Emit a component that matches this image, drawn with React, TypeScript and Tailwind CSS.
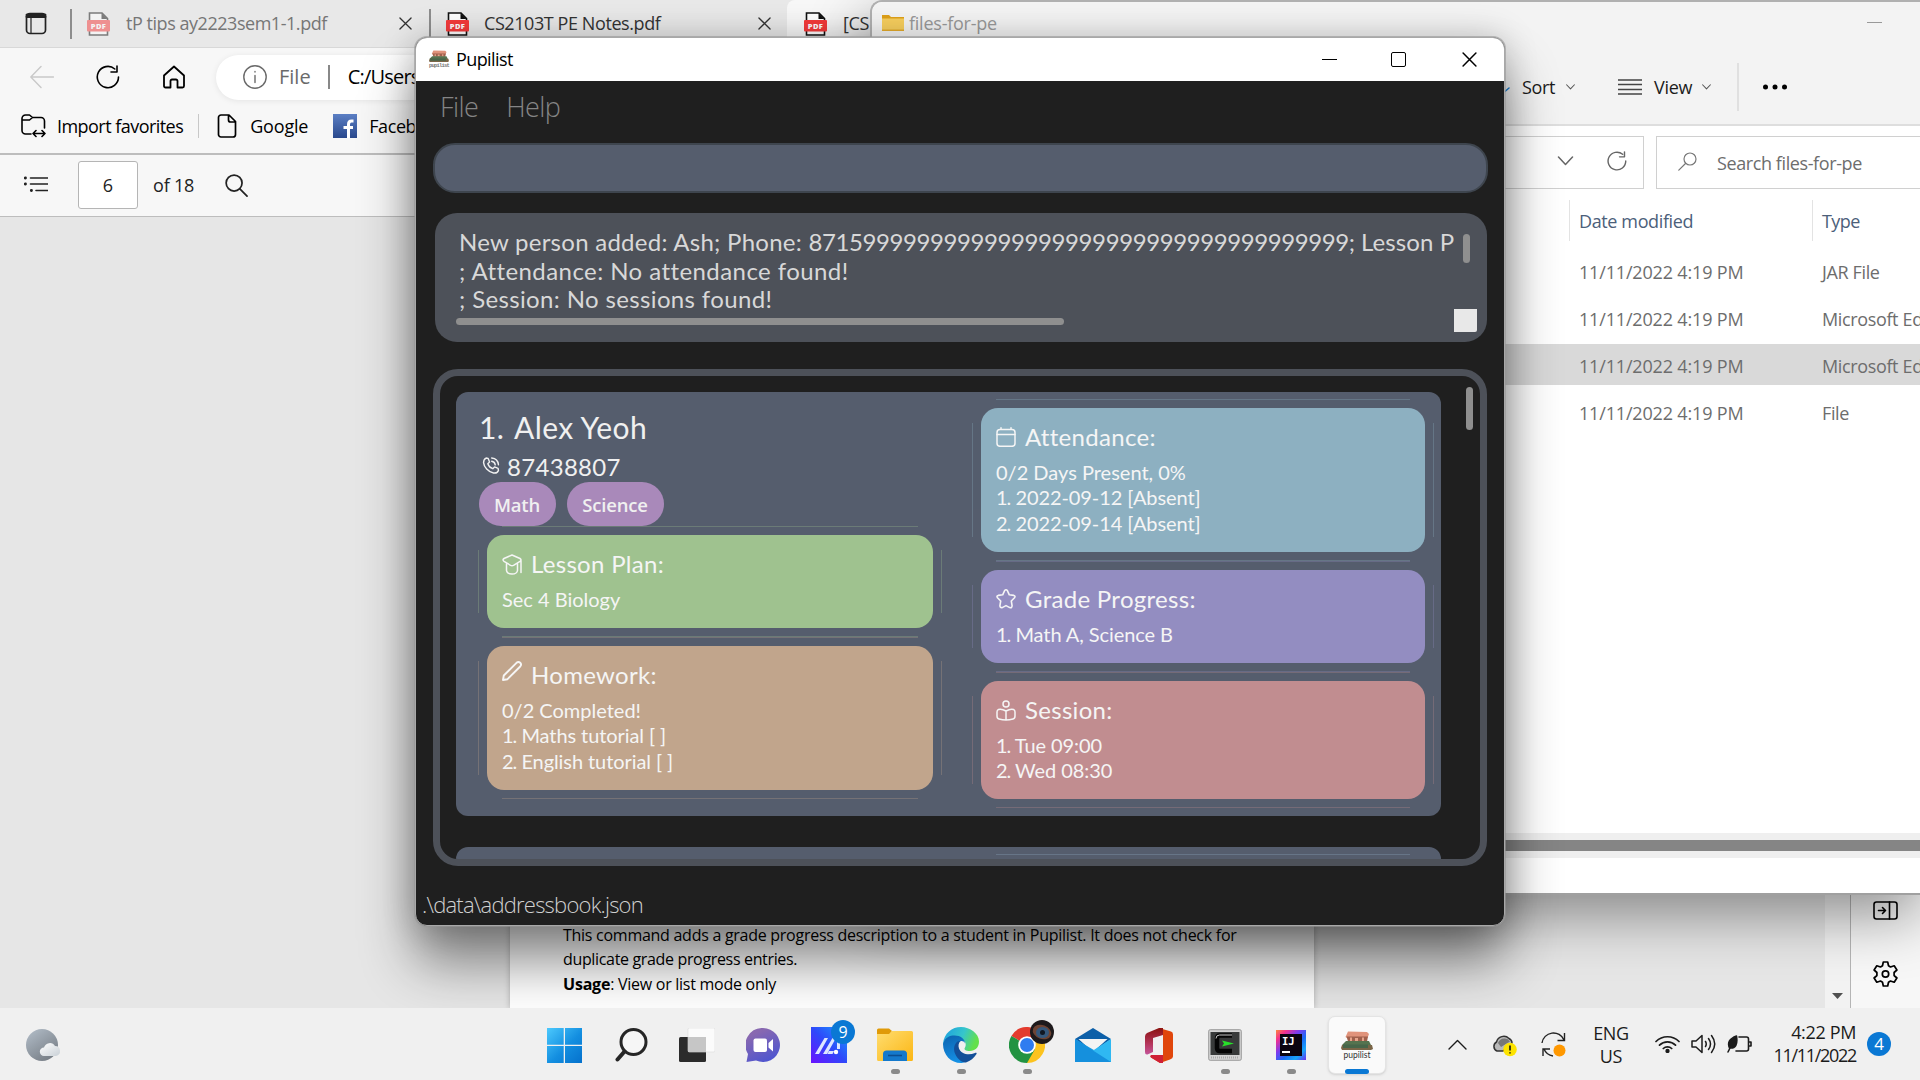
import React from 'react';
import type { ReactNode } from 'react';

type IconProps = { className?: string; children: ReactNode; box?: string; w?: number };

function Stroke({ className = '', children, box = '0 0 24 24', w = 1.5 }: IconProps) {
  return (
    <svg viewBox={box} className={`shrink-0 ${className}`} fill="none" stroke="currentColor" strokeWidth={w} strokeLinecap="round" strokeLinejoin="round">
      {children}
    </svg>
  );
}

function PdfIcon({ className = '' }: { className?: string }) {
  return (
    <span className={`relative block h-6 w-[23px] shrink-0 ${className}`}>
      <svg viewBox="0 0 23 24" className="h-6 w-[23px]" fill="none">
        <path d="M2.5 1H15l5.500 5.500V23h-18z" fill="#fff" stroke="#111" strokeWidth="1.600" />
        <path d="M14.500 1v6h6z" fill="#111" />
        <rect x="0" y="8" width="23" height="11.500" rx="1" fill="#f53b3b" />
      </svg>
      <span className="absolute inset-x-0 top-2 text-center font-['Open_Sans'] text-[7.5px] font-extrabold leading-[12px] tracking-[0.4px] text-white">PDF</span>
    </span>
  );
}

function CloseX({ className = '' }: { className?: string }) {
  return (
    <Stroke className={className} box="0 0 14 14" w={1.4}>
      <path d="M1 1l12 12M13 1L1 13" />
    </Stroke>
  );
}

function Reload({ className = '', w = 1.6 }: { className?: string; w?: number }) {
  return (
    <Stroke className={className} w={w}>
      <path d="M22.500 12A10.600 10.600 0 1 1 18.800 4M21 1v6h-6" />
    </Stroke>
  );
}

function FolderSmall() {
  return (
    <svg viewBox="0 0 22 18" className="h-[18px] w-[22px] shrink-0">
      <path d="M0 1h7l2 2h13v14H0z" fill="#dfa11a" />
      <path d="M0 4.500h22V17H0z" fill="#f7cf5e" />
      <path d="M0 15.500h22V17H0z" fill="#e3ab2c" />
    </svg>
  );
}

function Books({ className = '' }: { className?: string }) {
  return (
    <svg viewBox="0 0 32 19" className={className}>
      <path d="M7 .5l19 .5 2 2-1.500 4H6L4.500 6z" fill="#e0937b" />
      <path d="M5.500 5.500h21.500l-1 5H7z" fill="#a0604c" />
      <path d="M9 6.500h2v4H9zM14 7h3v3h-3zM21 6.500h2v4h-2z" fill="#e7a48b" />
      <path d="M5 10h23l2 4-1 2H2l-1-2z" fill="#55734f" />
      <path d="M1 14h30l1 4-2 1H1l-1-2z" fill="#7a6547" />
      <path d="M2 13.500h25v3.500H2z" fill="#47664a" />
    </svg>
  );
}

function Browser() {
  return (
    <div className="flex h-[1008px] w-full flex-col bg-[#e6e6e6] text-[18px] leading-6 text-black">
      <div className="flex h-12 shrink-0 items-center border-b border-[#d8d8d8] bg-[#e8e8e8] text-[#333]">
        <Stroke className="ml-[25px] h-[23px] w-[22px] text-[#222]" box="0 0 22 23" w={1.7}>
          <rect x="1.500" y="1.500" width="19" height="20" rx="3.500" />
          <path d="M2 4.500h18M2 3h18" strokeWidth="3" />
          <path d="M6 6v15" strokeWidth="1.200" />
        </Stroke>
        <div className="ml-[23px] h-[30px] w-[2px] bg-[#8d8d8d]" />
        <PdfIcon className="ml-[15px] opacity-50" />
        <span className="mb-px ml-[16px] w-[273px] whitespace-nowrap tracking-[-0.46px] text-[#767676]">tP tips ay2223sem1-1.pdf</span>
        <CloseX className="h-[13px] w-[13px]" />
        <div className="ml-[17px] h-[30px] w-[2px] bg-[#8d8d8d]" />
        <PdfIcon className="ml-[15px]" />
        <span className="mb-px ml-[15px] w-[274px] whitespace-nowrap tracking-[-0.42px]">CS2103T PE Notes.pdf</span>
        <CloseX className="h-[13px] w-[13px]" />
        <div className="ml-[16px] flex h-12 w-[360px] items-center rounded-t-lg bg-[#f7f7f7] pl-[17px]">
          <PdfIcon />
          <span className="mb-px ml-[16px] w-[27px] overflow-hidden whitespace-nowrap tracking-[-0.4px]">[CS</span>
        </div>
      </div>

      <div className="flex h-[105px] shrink-0 flex-col bg-[#f7f7f7]">
        <div className="mt-[6px] flex h-[46px] items-center">
          <Stroke className="ml-[30px] h-6 w-6 text-[#c9c9c9]" w={1.400}><path d="M23.500 12H.8M11 1.500L.8 12 11 22.500" /></Stroke>
          <Reload className="ml-[42px] h-6 w-6" />
          <Stroke className="ml-[42px] h-6 w-6" w={1.800}>
            <path d="M2 10.500L12 1.500l10 9V21a1.500 1.500 0 0 1-1.500 1.500H15.500V16a1.500 1.500 0 0 0-1.500-1.500h-4A1.500 1.500 0 0 0 8.500 16v6.500h-5A1.500 1.500 0 0 1 2 21z" />
          </Stroke>
          <div className="ml-[30px] flex h-[45px] flex-1 items-center rounded-l-full bg-white text-[20px] shadow-[0_1px_6px_rgba(0,0,0,0.08)]">
            <Stroke className="ml-[27px] h-6 w-6 text-[#6a6a6a]" w={1.400}><circle cx="12" cy="12" r="11.200" /><path d="M12 10.500v7M12 6.500v.6" /></Stroke>
            <span className="ml-[12px] text-[#6a6a6a]">File</span>
            <div className="ml-[17px] h-6 w-[2px] bg-[#888]" />
            <span className="ml-[18px] tracking-[-0.8px]">C:/Users</span>
          </div>
        </div>
        <div className="mt-[2px] flex h-12 items-center">
          <Stroke className="ml-[21px] h-6 w-[25px]" box="0 0 25 24" w={1.600}>
            <path d="M10 20H4.500A3.500 3.500 0 0 1 1 16.500V4.500A3.500 3.500 0 0 1 4.500 1h4L11.500 3.500H20A3.500 3.500 0 0 1 23.500 7v7M1 6h7.500l3-2.500" />
            <path d="M12 19.500h12M15 16.500l-3 3 3 3M21 16.500l3 3-3 3" />
          </Stroke>
          <span className="mb-px ml-[11px] tracking-[-0.54px]">Import favorites</span>
          <div className="ml-[15px] h-6 w-px bg-[#c8c8c8]" />
          <Stroke className="ml-[18px] h-6 w-5" box="0 0 20 24" w={1.700}>
            <path d="M1.500 3.500A2.500 2.500 0 0 1 4 1h8l6.500 6.500V20.500A2.500 2.500 0 0 1 16 23H4a2.500 2.500 0 0 1-2.500-2.500zM11.500 1.500V6A2 2 0 0 0 13.500 8h4.500" />
          </Stroke>
          <span className="mb-px ml-[13px] tracking-[-0.2px]">Google</span>
          <svg viewBox="0 0 24 24" className="ml-[25px] h-6 w-6">
            <defs><linearGradient id="fb" x2="0" y2="1"><stop stopColor="#5b7fc4" /><stop offset="1" stopColor="#29488c" /></linearGradient></defs>
            <path fill="url(#fb)" d="M0 0h24v24H0z" />
            <path d="M15.500 24V10.500Q15.500 7 18.500 7H20.500M10.500 13.500h9.500" stroke="#fff" strokeWidth="3" fill="none" />
          </svg>
          <span className="mb-px ml-[12px] tracking-[-0.4px]">Facebook</span>
        </div>
      </div>

      <div className="flex h-[64px] shrink-0 items-center border-b border-t-2 border-[#bdbdbd] bg-[#f7f7f7] pb-px text-[#222]">
        <Stroke className="mb-[2px] ml-[24px] h-4 w-6" box="0 0 24 16" w={1.600}>
          <path d="M6.500 2H23.500M6.500 8H23.500M12 14.500h11.500" />
          <path d="M1.300 2h.2M1.300 8h.2M7.300 14.500h.2" strokeWidth="2.800" />
        </Stroke>
        <div className="ml-[30px] flex h-12 w-[60px] items-center justify-center rounded-[3px] border border-[#b5b5b5] bg-white">6</div>
        <span className="ml-[15px] tracking-[-0.2px]">of 18</span>
        <Stroke className="ml-[31px] h-[23px] w-[23px]" w={1.800}><circle cx="9.500" cy="9.500" r="8.300" /><path d="M15.500 15.500L23 23" /></Stroke>
      </div>

      <div className="flex min-h-0 flex-1">
        <div className="flex flex-1 items-end pl-[510px]">
          <div className="flex h-full w-[804px] flex-col justify-end bg-white pb-[12px] pl-[53px] text-[16px] leading-[24.500px] tracking-[-0.27px] shadow-[0_0_6px_rgba(0,0,0,0.25)]">
            <p className="whitespace-nowrap">This command adds a grade progress description to a student in Pupilist. It does not check for</p>
            <p className="tracking-[-0.34px]">duplicate grade progress entries.</p>
            <p><b className="tracking-[-0.2px]">Usage</b>: View or list mode only</p>
          </div>
        </div>
        <div className="flex w-[25px] flex-col items-center justify-end bg-[#f2f2f2] pb-[9px]">
          <svg viewBox="0 0 11 6" className="h-[6px] w-[11px]"><path d="M0 0h11L5.500 6z" fill="#505050" /></svg>
        </div>
        <div className="flex w-[70px] flex-col items-start justify-end gap-[41px] border-l border-[#b5b5b5] bg-[#f7f7f7] pb-[21px] pl-[22px]">
          <Stroke className="h-[19px] w-[25px]" box="0 0 25 19" w={1.600}>
            <rect x="1" y="1" width="23" height="17" rx="2.500" /><path d="M16.500 1v17M5.500 9.500h7M9.500 6.500l3 3-3 3" />
          </Stroke>
          <Stroke className="h-[26px] w-[25px]" box="0 0 25 26" w={1.700}>
            <circle cx="12.500" cy="13" r="3.200" />
            <path d="M10.300 1h4.400l.8 3.800 2 1.200 3.700-1.200 2.700 4.200-2.800 2.500v3l2.800 2.500-2.700 4.200-3.700-1.200-2 1.200-.8 3.800h-4.400l-.8-3.800-2-1.200-3.700 1.200L1.100 17l2.800-2.500v-3L1.100 9l2.700-4.200L7.500 6l2-1.200z" />
          </Stroke>
        </div>
      </div>
    </div>
  );
}

const files = [
  { date: '11/11/2022 4:19 PM', type: 'JAR File', selected: false },
  { date: '11/11/2022 4:19 PM', type: 'Microsoft Edge PDF', selected: false },
  { date: '11/11/2022 4:19 PM', type: 'Microsoft Edge PDF', selected: true },
  { date: '11/11/2022 4:19 PM', type: 'File', selected: false },
];

function ChevronDown({ className = '', w = 1.100 }: { className?: string; w?: number }) {
  return <Stroke className={className} box="0 0 16 10" w={w}><path d="M1 1l7 7.500L15 1" /></Stroke>;
}

function Explorer() {
  return (
    <div className="absolute left-[870px] top-0 flex h-[895px] w-[1050px] flex-col overflow-hidden rounded-tl-xl border-b-2 border-l-2 border-t-2 border-[#b0b0b0] border-b-[#a0a0a0] bg-white text-[18px] leading-6 shadow-[0_20px_60px_rgba(0,0,0,0.42)]">
      <div className="flex h-[124px] shrink-0 flex-col border-b-2 border-[#dedede] bg-[#f3f3f3]">
        <div className="flex h-[44px] items-center pb-[2px] pl-[10px]">
          <FolderSmall />
          <span className="ml-[5px] flex-1 tracking-[-0.24px] text-[#999]">files-for-pe</span>
          <div className="mb-[2px] mr-[38px] h-px w-[15px] bg-[#999]" />
        </div>
        <div className="flex h-[78px] items-center pt-[3px] text-[#1b1b1b]">
          <Stroke className="ml-[628px] mt-[8px] h-2 w-[10px] text-[#1a7fd4]" box="0 0 10 8"><path d="M2 7l7-6" /></Stroke>
          <span className="ml-[12px] tracking-[-0.35px]">Sort</span>
          <ChevronDown className="ml-[11px] h-[6px] w-[9px] text-[#555]" w={1.800} />
          <Stroke className="ml-[43px] h-4 w-6 text-[#444]" box="0 0 24 16" w={1.300}><path d="M0 1h24M0 5.500h24M0 10.500h24M0 15h24" /></Stroke>
          <span className="ml-[12px] tracking-[-0.29px]">View</span>
          <ChevronDown className="ml-[10px] h-[6px] w-[9px] text-[#555]" w={1.800} />
          <div className="ml-[26px] h-12 w-[2px] bg-[#e0e0e0]" />
          <svg viewBox="0 0 24 6" className="ml-[24px] h-[6px] w-6"><circle cx="2.500" cy="3" r="2.500" /><circle cx="12" cy="3" r="2.500" /><circle cx="21.500" cy="3" r="2.500" /></svg>
        </div>
      </div>
      <div className="mt-[10px] flex h-[53px] shrink-0 gap-[12px] text-[#666]">
        <div className="flex w-[772px] items-center justify-end border border-l-0 border-[#d0d0d0] pb-[3px] pr-[16px]">
          <ChevronDown className="h-[10px] w-[17px]" w={1.500} />
          <Reload className="ml-[33px] h-5 w-5" w={1.700} />
        </div>
        <div className="flex flex-1 items-center border border-r-0 border-[#d0d0d0]">
          <Stroke className="mb-[2px] ml-[21px] h-[19px] w-[19px] text-[#777]" box="0 0 19 19" w={1.200}><circle cx="12" cy="7" r="6" /><path d="M7.500 11.500L.8 18.200" /></Stroke>
          <span className="ml-[20px] mt-px tracking-[-0.4px] text-[#6d6d6d]">Search files-for-pe</span>
        </div>
      </div>
      <div className="mt-[11px] flex h-[41px] shrink-0 items-center text-[#4c607a]">
        <div className="ml-[697px] flex h-full w-[243px] shrink-0 items-center border-l border-[#e3e3e3] pl-[9px] tracking-[-0.38px]">Date modified</div>
        <div className="flex h-full flex-1 items-center border-l border-[#e3e3e3] pl-[9px] tracking-[-0.6px]">Type</div>
      </div>
      <div className="mt-[9px] flex flex-col gap-[6px] text-[#6d6d6d]">
        {files.map((f, i) => (
          <div key={i} className={f.selected ? 'flex h-[41px] items-center bg-[#d9d9d9] pt-[2px]' : 'flex h-[41px] items-center pt-[2px]'}>
            <span className="ml-[707px] w-[243px] shrink-0 tracking-[-0.17px]">{f.date}</span>
            <span className="whitespace-nowrap tracking-[-0.36px]">{f.type}</span>
          </div>
        ))}
      </div>
      <div className="mt-auto h-[25px] shrink-0 border-y-[7px] border-[#efefef] bg-[#858585]" />
      <div className="h-[35px] shrink-0" />
    </div>
  );
}

function Line({ text }: { text: string }) {
  const m = /^(\d\.) (.*)$/.exec(text);
  return m ? <p><span className="tracking-[-1px]">{m[1]}</span> {m[2]}</p> : <p className="tracking-[0px]">{text}</p>;
}

type PanelProps = { title: string; lines: string[]; color: string; edge: string; size: string; icon: ReactNode };

function Panel({ title, lines, color, edge, size, icon }: PanelProps) {
  return (
    <div className={`relative w-full p-[9px] ${size}`}>
      <div className={`absolute inset-x-6 inset-y-0 border-y opacity-30 ${edge}`} />
      <div className={`absolute inset-x-0 inset-y-6 border-x opacity-30 ${edge}`} />
      <div className={`relative h-full rounded-[17px] pl-[15px] pt-[15px] text-[#f5f5f5] ${color}`}>
        <div className="flex h-7 items-center gap-[9px] text-[24px] leading-7 tracking-[0.3px]">
          {icon}
          <span>{title}</span>
        </div>
        <div className="mt-[8.500px] text-[20px] leading-[25.500px] tracking-[-0.08px]">
          {lines.map((l) => <Line key={l} text={l} />)}
        </div>
      </div>
    </div>
  );
}

function StudentCard() {
  return (
    <div className="flex h-[424px] shrink-0 justify-between rounded-xl bg-[#555d6d] pl-[22px] pr-[7px] text-[#f0f0f0]">
      <div className="flex w-[464px] flex-col pt-[17px]">
        <div className="flex pl-px text-[30px] leading-9 tracking-[0.4px]"><span className="w-[35px]">1.</span><span>Alex Yeoh</span></div>
        <div className="mt-2 flex h-[29px] pl-1 text-[24px] leading-[28.500px]">
          <Stroke className="mt-[4px] h-[17px] w-[18px]" w={2}>
            <path d="M5 1.500l3 .5 2 5-2.500 2.500c1 3 4 6 7 7L17 14l5 2 .5 3c-1 3-4 4-7 3.500C8 21 2 14 1.500 8 1.500 5 3 2.500 5 1.500z" />
            <path d="M13 6c3 .5 4.500 2 5 5M13 1.500c5 .5 9 4 9.500 9.500" />
          </Stroke>
          <span className="ml-[7px] tracking-[0.3px]">87438807</span>
        </div>
        <div className="flex gap-[11px] pl-[0.5px] font-['Open_Sans'] text-[18.500px] font-semibold leading-[45px]">
          <span className="h-[44px] w-[77px] rounded-full bg-[#a989ba] text-center tracking-[-0.2px]">Math</span>
          <span className="h-[44px] w-[97px] rounded-full bg-[#a989ba] text-center tracking-[-0.2px]">Science</span>
        </div>
        <Panel title="Lesson Plan:" lines={['Sec 4 Biology']} color="bg-[#9fc28f]" edge="border-[#9fc28f]" size="h-[111px]" icon={
          <Stroke className="h-[21px] w-5" box="0 0 20 21" w={1.500}><path d="M10 1L2 4.500Q0 5.800 2 7.300l6.500 4q1.500.8 3 0l6.500-4q2-1.500 0-2.800zM4.500 9.500V16.500Q5 20 10 20t5.500-3.500V9.500M19 6.500v12" /></Stroke>} />
        <Panel title="Homework:" lines={['0/2 Completed!', '1. Maths tutorial [ ]', '2. English tutorial [ ]']} color="bg-[#c1a58c]" edge="border-[#c1a58c]" size="h-[162px]" icon={
          <Stroke className="mb-[8px] h-5 w-5" box="0 0 20 20" w={1.900}><path d="M1 19l.8-4.500L14.500 1.800q2-1.600 3.700 0t0 3.700L5.500 18.200z" /></Stroke>} />
      </div>
      <div className="flex w-[462px] flex-col pt-[7px]">
        <Panel title="Attendance:" lines={['0/2 Days Present, 0%', '1. 2022-09-12 [Absent]', '2. 2022-09-14 [Absent]']} color="bg-[#8db0c1]" edge="border-[#8db0c1]" size="h-[162px]" icon={
          <Stroke className="h-5 w-5" box="0 0 20 20" w={1.500}><rect x="1" y="2.500" width="18" height="16.800" rx="3" /><path d="M1 7.500h18M5 .8v1.500M15 .8v1.500" /></Stroke>} />
        <Panel title="Grade Progress:" lines={['1. Math A, Science B']} color="bg-[#938dc1]" edge="border-[#938dc1]" size="h-[111px]" icon={
          <Stroke className="h-5 w-5" box="0 0 20 20" w={1.600}><path d="M8.500 1.800q1.500-2 3 0l1.800 4 4.500.6q2 .7.700 2.400L15.300 12l.8 4.800q-.2 2.500-2.300 1.800L10 16.600l-3.800 2Q4 19 3.900 16.800L4.700 12 1.500 8.800Q.2 7 2.200 6.400l4.500-.6z" /></Stroke>} />
        <Panel title="Session:" lines={['1. Tue 09:00', '2. Wed 08:30']} color="bg-[#c18d90]" edge="border-[#c18d90]" size="h-[136px]" icon={
          <Stroke className="h-[21px] w-5" box="0 0 20 21" w={1.500}><circle cx="10" cy="4" r="3" /><path d="M10 11Q5.500 8.500 2.500 9.500 1 10 1 12v4q0 2.500 2 3 3.500 1 7 1t7-1q2-.5 2-3v-4q0-2-1.500-2.500-3-1-7.500 1.500zM10 11v9" /></Stroke>} />
      </div>
    </div>
  );
}

function Pupilist() {
  return (
    <div className="absolute left-[415px] top-[37px] flex h-[889px] w-[1090px] flex-col overflow-hidden rounded-xl border border-[#a8a8a8] bg-[#1f1f1f] font-['Open_Sans'] shadow-[0_0_0_1px_rgba(150,150,150,0.6),0_36px_54px_rgba(0,0,0,0.46),0_0_34px_rgba(0,0,0,0.2)]">
      <div className="flex h-[43px] shrink-0 items-center bg-white text-black">
        <div className="ml-[13px] flex w-5 flex-col items-center">
          <Books className="h-[12px] w-5" />
          <span className="font-['Liberation_Mono'] text-[5.500px] font-bold leading-[7px] tracking-[-0.8px] text-[#777]">pupilist</span>
        </div>
        <span className="mb-px ml-[7px] flex-1 text-[18px] leading-6 tracking-[-0.6px]">Pupilist</span>
        <div className="h-px w-[15px] bg-black" />
        <div className="ml-[54px] h-[15px] w-[15px] rounded-[2px] border-[1.500px] border-black" />
        <CloseX className="ml-[56px] mr-[27px] h-[15px] w-[15px]" />
      </div>
      <div className="flex h-[62px] shrink-0 gap-[28px] pl-[24px] pt-[8px] text-[27px] font-light leading-9 tracking-[-0.6px] text-[#858585]">
        <span>File</span><span>Help</span>
      </div>
      <div className="ml-[17px] h-[50px] w-[1055px] shrink-0 rounded-[22px] border-2 border-[#3e454e] bg-[#555d6d]" />
      <div className="ml-[19px] mt-[20px] flex h-[129px] w-[1052px] shrink-0 rounded-[22px] bg-[#4d5159] pl-[21px] pt-[15px] font-['Lato'] text-[24px] leading-[28.500px] text-[#d8d8d8]">
        <div className="flex w-[998px] flex-col">
          <div className="overflow-hidden whitespace-pre pl-[3px]">
            <p><span className="tracking-[0.26px]">New person added: Ash; Phone: </span><span className="tracking-[-0.41px]">8715999999999999999999999999999999999999;</span><span className="tracking-[0.1px]"> Lesson P</span></p>
            <p className="tracking-[0.43px]">; Attendance: No attendance found!</p>
            <p className="tracking-[0.36px]">; Session: No sessions found!</p>
          </div>
          <div className="mt-[4px] h-[7px] w-[608px] rounded-full bg-[#8f8f8f]" />
        </div>
        <div className="flex w-6 flex-col items-start">
          <div className="ml-[9px] mt-[6px] h-[29px] w-[7px] rounded-full bg-[#8f8f8f]" />
          <div className="mt-[46px] h-[23px] w-[23px] rounded-br-[2px] bg-[#e8e8e8]" />
        </div>
      </div>
      <div className="ml-[17px] mt-[27px] flex h-[497px] w-[1054px] shrink-0 overflow-hidden rounded-[25px] border-[7px] border-[#4d5159]">
        <div className="ml-4 flex w-[985px] flex-col gap-[31px] overflow-hidden pt-4 font-['Lato']">
          <StudentCard />
          <div className="h-[40px] shrink-0 rounded-t-xl bg-[#555d6d] pl-[540px] pr-[31px] pt-[7px]">
            <div className="h-px bg-[#677587]" />
          </div>
        </div>
        <div className="ml-[24.500px] mt-[11px] h-[43px] w-[7px] rounded-full bg-[#8f8f8f]" />
      </div>
      <p className="ml-[6px] mt-[22px] text-[22px] font-light leading-8 tracking-[-0.78px] text-[#d0d0d0]">.\data\addressbook.json</p>
    </div>
  );
}

function Cell({ children, mark = false }: { children: ReactNode; mark?: boolean }) {
  return (
    <div className="relative flex h-full w-[66px] items-center justify-center pt-[2px]">
      {children}
      {mark && <div className="absolute bottom-[6px] h-[5px] w-[9px] rounded-full bg-[#8a8a8a]" />}
    </div>
  );
}

function Taskbar() {
  return (
    <div className="absolute bottom-0 left-0 flex h-[72px] w-full items-center bg-[#f0f0f0] text-[18px] leading-[23px] text-[#1b1b1b]">
      <svg viewBox="0 0 36 34" className="ml-[26px] mt-[2px] h-[34px] w-[36px]">
        <defs>
          <linearGradient id="moon" x1="0" y1="0" x2=".7" y2="1"><stop stopColor="#b4bfca" /><stop offset="1" stopColor="#777e86" /></linearGradient>
          <linearGradient id="cl" x2="1" y2="1"><stop stopColor="#fff" /><stop offset="1" stopColor="#c9d0d6" /></linearGradient>
        </defs>
        <circle cx="16" cy="17" r="16" fill="url(#moon)" />
        <path d="M18 28a4.200 4.200 0 0 1 0-8.400 6 6 0 0 1 11-1.500 5 5 0 0 1 1 9.900z" fill="url(#cl)" />
      </svg>
      <div className="ml-[470px] flex h-full items-center">
        <Cell>
          <svg viewBox="0 0 35 35" className="mr-px h-[35px] w-[35px]">
            <defs><linearGradient id="win" x2="1" y2="1"><stop stopColor="#4cc9fd" /><stop offset=".55" stopColor="#138ee0" /><stop offset="1" stopColor="#0571cc" /></linearGradient></defs>
            <path d="M0 0h16.700v16.700H0zM18 0h17v16.700H18zM0 18h16.700v17H0zM18 18h17v17H18z" fill="url(#win)" />
          </svg>
        </Cell>
        <Cell>
          <svg viewBox="0 0 33 34" className="h-[34px] w-[33px]" fill="none" stroke="#262626">
            <circle cx="18.500" cy="14" r="12.500" strokeWidth="3" fill="#f6f6f6" /><path d="M9.500 23.500L2.500 31.500" strokeWidth="4" strokeLinecap="round" />
          </svg>
        </Cell>
        <Cell>
          <svg viewBox="0 0 36 34" className="h-[34px] w-[36px]">
            <rect x="0" y="9" width="27" height="25" rx="1.500" fill="#2b2b2b" />
            <rect x="9" y="0" width="27" height="24" rx="1.500" fill="#fbfbfb" stroke="#dcdcdc" strokeWidth=".6" />
            <path d="M9 9h18v15H9z" fill="#c6c6c6" />
          </svg>
        </Cell>
        <Cell>
          <svg viewBox="0 0 34 34" className="h-[34px] w-[34px]">
            <defs><linearGradient id="chat" x1=".2" y1=".2" x2=".6" y2="1"><stop stopColor="#8868b0" /><stop offset="1" stopColor="#4f55cf" /></linearGradient></defs>
            <path d="M17 0a17 17 0 1 1-7 32.500L.5 34 2 26A17 17 0 0 1 17 0z" fill="url(#chat)" />
            <rect x="7.500" y="10.500" width="13.500" height="13.500" rx="2" fill="#fff" /><path d="M22.500 15l4.500-4v12.500l-4.500-4z" fill="#fff" />
          </svg>
        </Cell>
        <Cell>
          <svg viewBox="0 0 36 36" className="h-9 w-9">
            <defs><linearGradient id="my" x1="0" y1="1" x2="1" y2="0"><stop stopColor="#6a12ff" /><stop offset=".5" stopColor="#2e49fa" /><stop offset="1" stopColor="#1aa0ff" /></linearGradient></defs>
            <path d="M0 0h36v36H0z" fill="url(#my)" />
            <path d="M4 27l9.500-16h3.500L8 27zM12 27l9.500-16H25L16 27zM18 24h5l-1.500 3h-5zM26 13h3v9h-3z" fill="#dde6ff" /><circle cx="25" cy="25" r="2.200" fill="#fff" />
          </svg>
          <span className="absolute right-[7px] top-3 h-6 w-6 rounded-full bg-[#0a78d4] text-center text-[16px] leading-6 text-white">9</span>
        </Cell>
        <Cell mark>
          <svg viewBox="0 0 36 34" className="h-[34px] w-9">
            <defs><linearGradient id="fo" x2="1" y2="1"><stop stopColor="#ffdd70" /><stop offset="1" stopColor="#fbb614" /></linearGradient></defs>
            <path d="M0 2q0-1.500 1.500-1.500H12l3 2.500-3 4H0z" fill="#e09a08" />
            <path d="M0 6h12l3-3h19.500q1.500 0 1.500 1.500V31.500q0 1.500-1.500 1.500h-33Q0 33 0 31.500z" fill="url(#fo)" />
            <path d="M6 33v-7q0-3.500 3.500-3.500h17Q30 22.500 30 26v7z" fill="#1479cc" /><path d="M11 27.500h14" stroke="#0b4e91" strokeWidth="1.600" />
          </svg>
        </Cell>
        <Cell mark>
          <svg viewBox="0 0 36 36" className="h-9 w-9">
            <defs>
              <linearGradient id="e1" x2="1" y2=".3"><stop stopColor="#1b9de2" /><stop offset=".6" stopColor="#36c6cb" /><stop offset="1" stopColor="#63e04c" /></linearGradient>
              <linearGradient id="e2" x2=".3" y2="1"><stop stopColor="#0c62ae" /><stop offset="1" stopColor="#1590e4" /></linearGradient>
            </defs>
            <path d="M0 17C1 6 9 0 18 0s18 6.500 18 14.500c0 6-4 9.500-9 9.500-4.500 0-6.500-1.500-5-3.500s1-7-4-8.500z" fill="url(#e1)" />
            <path d="M0 17C2 10 7 8.500 11.500 8.500c6 0 10.500 3.500 10.500 8-1-2.500-3.500-3-5-2-3 2-3.500 6-2 9.500s7 8 12 7.500C24 35 20 36 18 36 8 36 0 28 0 17z" fill="url(#e2)" />
            <path d="M14.500 14.500c-3 2.500-4.500 7-2.500 12s7 9.500 11 9c4.500-1.500 8-4.500 10.500-8.500.5-1-.5-1.500-1.500-1-7 3-14 .5-16-4.500-1-3-.5-5.500 1.500-7.500z" fill="#134f98" />
          </svg>
        </Cell>
        <Cell mark>
          <svg viewBox="0 0 36 36" className="h-9 w-9">
            <path d="M18 18L2.400 9A18 18 0 0 1 33.600 9z" fill="#e33b2e" />
            <path d="M18 18L33.600 9A18 18 0 0 1 18 36z" fill="#fcc31e" />
            <path d="M18 18l7.800 4.500L18 36A18 18 0 0 1 2.400 9z" fill="#229342" />
            <path d="M18 9.500h15.800L18 18z" fill="#e33b2e" />
            <circle cx="18" cy="18" r="8.800" fill="#fff" /><circle cx="18" cy="18" r="7" fill="#2f7cf0" />
          </svg>
          <svg viewBox="0 0 24 24" className="absolute right-[6px] top-3 h-6 w-6">
            <circle cx="12" cy="12" r="12" fill="#1e1a1c" /><ellipse cx="12" cy="12" rx="9.500" ry="7" fill="#6e4434" transform="rotate(20 12 12)" /><ellipse cx="12.500" cy="12.500" rx="6.500" ry="5.500" fill="#35587c" /><circle cx="12.500" cy="12.500" r="2.500" fill="#101722" />
          </svg>
        </Cell>
        <Cell>
          <svg viewBox="0 0 36 34" className="h-[34px] w-9">
            <path d="M0 11L18 0l18 11-18 13z" fill="#0c5fa8" /><path d="M3.500 11h29L18 24z" fill="#f4f4f4" />
            <path d="M0 11l24 14L36 34H0z" fill="#1a9ee6" /><path d="M36 11L0 34h36z" fill="#2fb8f2" /><path d="M0 11l36 23H0z" fill="#1590dd" />
          </svg>
        </Cell>
        <Cell>
          <svg viewBox="0 0 28 35" className="h-[35px] w-7">
            <defs><linearGradient id="of" y2="1" x2="0"><stop stopColor="#8a1210" /><stop offset=".6" stopColor="#b5365c" /><stop offset="1" stopColor="#c4559a" /></linearGradient></defs>
            <path d="M14 0L2 5Q0 6 0 8.500V24q0 3 2.500 2.500L8 24V10l10-3V0z" fill="url(#of)" />
            <path d="M14 0l4 1v26H7q-2.500 1-1 2.500l9 5.500 10-3.500q3-1 3-3V6.500Q28 4 26 3.500z" fill="#e0460c" /><path d="M6 27h12v8l-3 0-9-5.500q-1.500-1.500 0-2.500z" fill="#cf2036" />
          </svg>
        </Cell>
        <Cell mark>
          <svg viewBox="0 0 34 32" className="h-8 w-[34px]">
            <rect x=".7" y=".7" width="32.600" height="30.600" rx="1.500" fill="#d4d4d4" stroke="#9b9b9b" />
            <path d="M2.500 3h29v23h-29z" fill="#383a3a" /><path d="M24 6.500H12q-3 0-3 3V19q0 3 3 3h12" stroke="#050505" strokeWidth="4.500" fill="none" /><path d="M24 6H11.500Q8 6 8 9.500" stroke="#c9c9c9" fill="none" />
            <path d="M14 11.500l12 3-12 3 2-3z" fill="#28e02a" /><path d="M3 28.500h28" stroke="#aaa" strokeWidth="2" strokeDasharray="1 1" />
          </svg>
        </Cell>
        <Cell mark>
          <div className="flex h-[30px] w-[30px] items-center justify-center bg-[linear-gradient(135deg,#fc8a3c_0%,#f4318c_18%,#7a3cf0_40%,#1a6cf5_60%,#18a5fa_80%,#6a2ff0_100%)]">
            <div className="flex h-[22px] w-[22px] flex-col bg-[#0b0410] pl-[2px] pt-[2px] font-['DejaVu_Sans_Mono'] text-[10.500px] font-bold leading-[10px] text-white">
              IJ
              <div className="mt-[5px] h-[2px] w-[8px] bg-white" />
            </div>
          </div>
        </Cell>
        <Cell>
          <div className="flex h-[58px] w-[58px] flex-col items-center rounded-[7px] border border-[#e4e4e4] bg-[#fafafa] pt-[14px] shadow-sm">
            <Books className="h-[19px] w-8" />
            <span className="mt-px font-['Lato'] text-[8.500px] leading-[9px] tracking-[0px] text-[#333]">pupilist</span>
          </div>
          <div className="absolute bottom-[6px] h-[5px] w-6 rounded-full bg-[#0a78d4]" />
        </Cell>
      </div>
      <Stroke className="ml-[58px] h-[11px] w-[19px]" box="0 0 19 11" w={1.400}><path d="M1 10l8.500-8.500L18 10" /></Stroke>
      <svg viewBox="0 0 25 24" className="ml-[25px] mt-px h-6 w-[25px]">
        <path d="M5 18a5 5 0 0 1-.5-9A7.500 7.500 0 0 1 17 5.500Q20 7 20 10L11 18z" fill="#b9b9b9" stroke="#333" strokeWidth="1.500" /><path d="M6 10q2-5 7-4.500 3 0 5 3L9 14z" fill="#777" />
        <circle cx="18" cy="16.500" r="6.800" fill="#fde300" /><path d="M18 12.500v5M18 19.300v1.300" stroke="#111" strokeWidth="1.600" />
      </svg>
      <svg viewBox="0 0 25 25" className="ml-[24px] h-[25px] w-[25px]" fill="none" stroke="#222" strokeWidth="1.400">
        <path d="M1 11A11.500 11.500 0 0 1 23 8M23.500 1v7.500h-7M12 24A11.500 11.500 0 0 1 3 17M2 24v-7h7" /><circle cx="18.500" cy="18.500" r="6" fill="#ff9800" stroke="none" />
      </svg>
      <div className="ml-[26px] w-[38px] pt-px text-center tracking-[-0.3px]"><p>ENG</p><p>US</p></div>
      <Stroke className="ml-[25px] h-[18px] w-[25px]" box="0 0 25 18" w={1.700}><path d="M1 6.500a16.300 16.300 0 0 1 23 0M4.500 10.200a11.300 11.300 0 0 1 16 0M8.300 13.500a6 6 0 0 1 8.400 0" /><circle cx="12.500" cy="16" r="1.300" fill="currentColor" /></Stroke>
      <Stroke className="ml-[11px] h-5 w-[25px]" box="0 0 25 20" w={1.500}><path d="M1 7h4l6-5.500v17L5 13H1zM14.500 7.500q1.500 2.500 0 5M17.500 4.500q4 5.500 0 11M20.500 1.500q6.500 8.500 0 17" /></Stroke>
      <Stroke className="ml-[11px] h-[18px] w-[25px]" box="0 0 25 18" w={1.600}><path d="M12 2h7.500q2 0 2 2v10q0 2-2 2H9M22 7h2v4h-2" /><path d="M1 17l2-4M2.500 13Q-1 5 9.500 1q2 13-7 12z" fill="currentColor" /></Stroke>
      <div className="ml-[20px] w-[84px] text-right"><p className="tracking-[-0.35px]">4:22 PM</p><p className="tracking-[-1.300px]">11/11/2022</p></div>
      <span className="ml-[11px] h-6 w-6 rounded-full bg-[#0a78d4] text-center text-[17px] leading-6 text-white">4</span>
    </div>
  );
}

export default function App() {
  return (
    <div className="relative h-[1080px] w-[1920px] overflow-hidden bg-[#e6e6e6] font-['Open_Sans',sans-serif]">
      <Browser />
      <Explorer />
      <Pupilist />
      <Taskbar />
    </div>
  );
}
